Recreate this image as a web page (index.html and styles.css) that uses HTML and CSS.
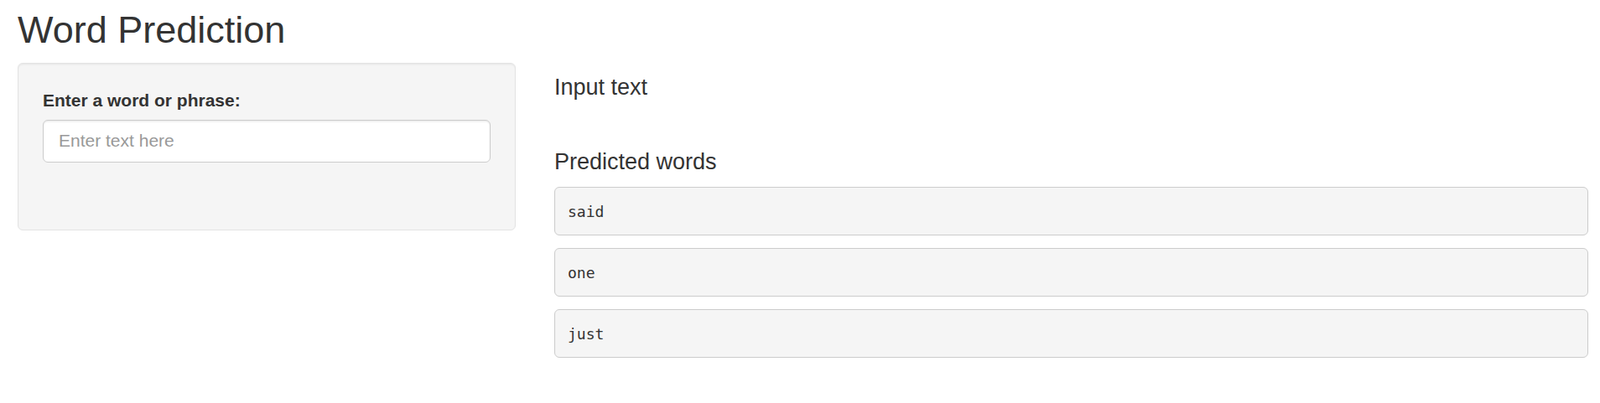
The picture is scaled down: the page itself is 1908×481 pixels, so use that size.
FILE: index.html
```html
<!DOCTYPE html>
<html lang="en">
<head>
<meta charset="utf-8">
<title>Word Prediction</title>
<link rel="stylesheet" href="styles.css">
</head>
<body>
<div class="page">
  <h2 class="title">Word Prediction</h2>
  <div class="layout">
    <div class="sidebar">
      <form class="well">
        <div class="form-group">
          <label class="control-label" for="text">Enter a word or phrase:</label>
          <input id="text" class="form-control" type="text" placeholder="Enter text here">
        </div>
      </form>
    </div>
    <div class="main">
      <h4 class="section-title">Input text</h4>
      <div class="text-output"></div>
      <h4 class="section-title">Predicted words</h4>
      <pre class="word">said</pre>
      <pre class="word">one</pre>
      <pre class="word">just</pre>
    </div>
  </div>
</div>
</body>
</html>
```

FILE: styles.css
```css
* {
  box-sizing: border-box;
}

html, body {
  margin: 0;
  padding: 0;
  background: #ffffff;
}

body {
  font-family: "Liberation Sans", Arial, Helvetica, sans-serif;
  font-size: 21px;
  line-height: 1.42857;
  color: #333333;
}

.page {
  padding: 0 14px 0 21px;
}

.title {
  margin: 11px 0 14.5px;
  font-size: 45px;
  line-height: 49.5px;
  font-weight: normal;
  color: #333333;
}

.layout {
  display: flex;
  align-items: flex-start;
  gap: 46.5px;
}

.sidebar {
  flex: none;
  width: 593.5px;
}

.well {
  margin: 0;
  padding: 29px 29px 58px;
  background: #f5f5f5;
  border: 1px solid #e3e3e3;
  border-radius: 6px;
  box-shadow: inset 0 1.5px 1.5px rgba(0, 0, 0, 0.05);
}

.form-group {
  margin-bottom: 22.5px;
}

.control-label {
  display: block;
  margin-bottom: 7.5px;
  font-weight: bold;
  font-size: 21px;
  line-height: 30px;
}

.form-control {
  display: block;
  width: 100%;
  height: 51px;
  padding: 9px 18px;
  font-family: "Liberation Sans", Arial, Helvetica, sans-serif;
  font-size: 21px;
  line-height: 30px;
  color: #555555;
  background: #ffffff;
  border: 1.5px solid #cccccc;
  border-radius: 6px;
  box-shadow: inset 0 1.5px 1.5px rgba(0, 0, 0, 0.075);
  outline: none;
}

.form-control::placeholder {
  color: #999999;
  opacity: 1;
}

.main {
  flex: 1;
  min-width: 0;
}

.section-title {
  margin: 15px 0;
  font-size: 27px;
  line-height: 29.7px;
  font-weight: normal;
}

.text-output {
  height: 29px;
}

.word {
  margin: 0 0 15px;
  padding: 14.5px 15px;
  font-family: "DejaVu Sans Mono", "Liberation Mono", monospace;
  font-size: 18px;
  line-height: 27px;
  color: #333333;
  background: #f5f5f5;
  border: 1.5px solid #cccccc;
  border-radius: 6px;
  white-space: pre-wrap;
}
```
